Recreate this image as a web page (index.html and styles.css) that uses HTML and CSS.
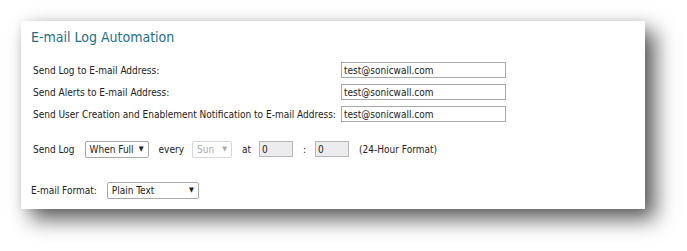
FILE: index.html
```html
<!DOCTYPE html>
<html lang="en">
<head>
    <meta charset="UTF-8">
    <title>E-mail Log Automation</title>
    <link rel="stylesheet" href="styles.css">
</head>
<body>
    <div class="panel">
        <header class="title">E-mail Log Automation</header>

        <div class="address-rows">
            <div class="row">
                <label class="label">Send Log to E-mail Address:</label>
                <input class="email" type="text" value="test@sonicwall.com">
            </div>
            <div class="row">
                <label class="label">Send Alerts to E-mail Address:</label>
                <input class="email" type="text" value="test@sonicwall.com">
            </div>
            <div class="row">
                <label class="label">Send User Creation and Enablement Notification to E-mail Address:</label>
                <input class="email" type="text" value="test@sonicwall.com">
            </div>
        </div>

        <div class="row schedule">
            <span>Send Log</span>
            <div class="select when">When Full <span class="arrow">&#9660;</span></div>
            <span class="every">every</span>
            <div class="select day disabled">Sun <span class="arrow">&#9660;</span></div>
            <span>at</span>
            <input class="time" type="text" value="0">
            <span class="colon">:</span>
            <input class="time" type="text" value="0">
            <span>(24-Hour Format)</span>
        </div>

        <div class="row format">
            <span>E-mail Format:</span>
            <div class="select plain">Plain Text <span class="arrow">&#9660;</span></div>
        </div>
    </div>
</body>
</html>
```

FILE: styles.css
```css
html, body {
    margin: 0;
    padding: 0;
    background: #fff;
}
body {
    min-height: 251px;
    font-family: "DejaVu Sans", sans-serif;
    font-stretch: condensed;
    font-size: 10px;
    color: #222;
}
.panel {
    box-sizing: border-box;
    width: 624px;
    height: 188px;
    margin: 21px 0 0 21px;
    padding: 6px 0 0 12px;
    background: #fff;
    box-shadow: 10px 10px 20px rgba(0, 0, 0, 0.65), 0 0 8px rgba(0, 0, 0, 0.08);
}
.title {
    height: 20px;
    line-height: 20px;
    margin-left: -2px;
    font-size: 14px;
    color: #1f6e8c;
}
.address-rows {
    display: flex;
    flex-direction: column;
    gap: 4px;
    margin-top: 14px;
}
.row {
    display: flex;
    align-items: center;
    height: 18px;
}
.label {
    width: 308px;
}
input {
    box-sizing: border-box;
    font: inherit;
    font-size: 10px;
    color: #222;
    border: 1px solid #a9a9a9;
    padding: 0 2px;
    margin: 0;
    outline: none;
}
.email {
    width: 165px;
    height: 16px;
}
.schedule {
    margin-top: 17px;
}
.schedule > * {
    margin-right: 10px;
}
.schedule > .every {
    margin-right: 8px;
}
.select {
    box-sizing: border-box;
    height: 17px;
    line-height: 15px;
    border: 1px solid #a9a9a9;
    border-radius: 2px;
    padding: 0 4px;
    display: flex;
    justify-content: space-between;
    align-items: center;
}
.arrow {
    font-size: 7px;
    margin-left: 4px;
}
.when {
    width: 64px;
}
.day {
    width: 40px;
}
.disabled {
    color: #aaa;
    border-color: #d6d6d6;
}
.time {
    width: 34px;
    height: 16px;
    background: #ececef;
    border-color: #b8b8b8;
}
.schedule > .time:first-of-type {
    margin-left: -2px;
}
.schedule > .colon {
    margin-right: 9px;
}
.format {
    margin-top: 23px;
    margin-left: -2px;
}
.format > span {
    margin-right: 10px;
}
.plain {
    width: 92px;
}
```
